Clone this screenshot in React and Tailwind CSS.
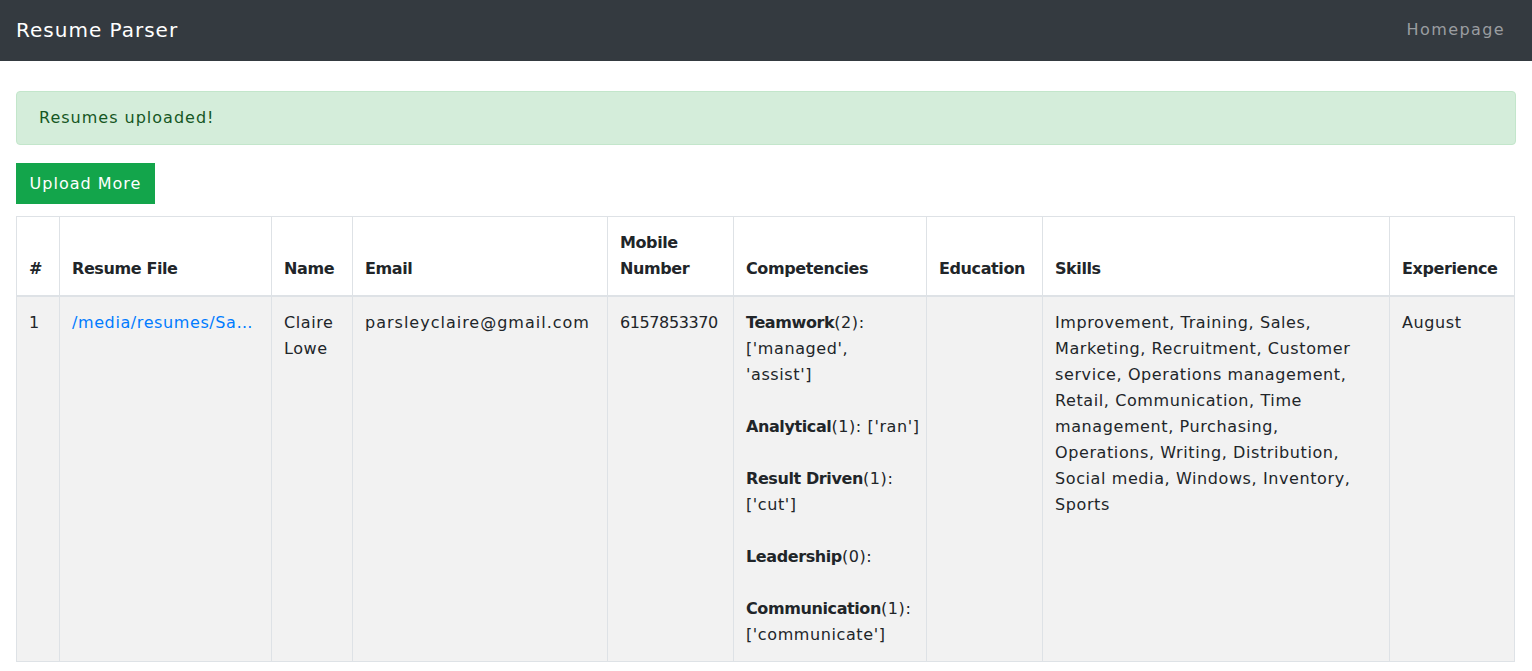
import React from "react";

const competencies = [
  { name: "Teamwork", count: 2, words: "['managed', 'assist']" },
  { name: "Analytical", count: 1, words: "['ran']", nowrap: true },
  { name: "Result Driven", count: 1, words: "['cut']" },
  { name: "Leadership", count: 0, words: "" },
  { name: "Communication", count: 1, words: "['communicate']" },
];

const skills =
  "Improvement, Training, Sales, Marketing, Recruitment, Customer service, Operations management, Retail, Communication, Time management, Purchasing, Operations, Writing, Distribution, Social media, Windows, Inventory, Sports";

const headers = ["#", "Resume File", "Name", "Email", "Mobile Number", "Competencies", "Education", "Skills", "Experience"];

const td = "px-3 pt-[13px] pb-[13px] border border-[#dee2e6]";

export default function App() {
  return (
    <div className="min-h-screen bg-white text-[#212529] text-[16px] leading-[26px] tracking-[0.6px] font-['DejaVu_Sans',sans-serif]">
      {/* NAVBAR */}
      <nav className="h-[61px] bg-[#343a40] flex items-center justify-between px-4 pb-[2px]">
        <span className="text-white text-[20px] tracking-[1px]">Resume Parser</span>
        <a href="#" className="text-[#9a9da0] tracking-[1.4px] pr-[11px]">
          Homepage
        </a>
      </nav>

      <div className="px-4 pt-[30px]">
        {/* ALERT */}
        <div className="h-[54px] flex items-center px-[22px] bg-[#d4edda] border border-[#c3e6cb] rounded text-[#155724] tracking-[1px]">
          Resumes uploaded!
        </div>

        <button className="mt-[18px] h-[41px] w-[139px] bg-[#13a54b] text-white tracking-[1px]">
          Upload More
        </button>

        {/* RESULTS TABLE */}
        <table className="mt-[12px] table-fixed border-collapse border border-[#dee2e6] w-[1498px]">
          <colgroup>
            <col className="w-[43px]" />
            <col className="w-[212px]" />
            <col className="w-[81px]" />
            <col className="w-[255px]" />
            <col className="w-[126px]" />
            <col className="w-[193px]" />
            <col className="w-[116px]" />
            <col className="w-[347px]" />
            <col className="w-[125px]" />
          </colgroup>
          <thead>
            <tr className="text-left align-bottom">
              {headers.map((h) => (
                <th key={h} className="px-3 pt-[13px] pb-[13px] font-bold tracking-[-0.4px] border border-[#dee2e6] border-b-2">
                  {h}
                </th>
              ))}
            </tr>
          </thead>
          <tbody>
            <tr className="bg-[#f2f2f2] align-top">
              <td className={td}>1</td>
              <td className={td}>
                <a href="#" className="block truncate text-[#007bff]">
                  /media/resumes/Sa…
                </a>
              </td>
              <td className={td}>Claire Lowe</td>
              <td className={td + " tracking-[1px]"}>parsleyclaire@gmail.com</td>
              <td className={td + " tracking-[-0.4px]"}>6157853370</td>
              <td className={td}>
                {competencies.map((c, i) => (
                  <div key={c.name} className={(i > 0 ? "mt-[26px] " : "") + (c.nowrap ? "whitespace-nowrap" : "")}>
                    <b className="tracking-[-0.4px]">{c.name}</b>({c.count}): {c.words}
                  </div>
                ))}
              </td>
              <td className={td}></td>
              <td className={td}>{skills}</td>
              <td className={td}>August</td>
            </tr>
          </tbody>
        </table>
      </div>
    </div>
  );
}
